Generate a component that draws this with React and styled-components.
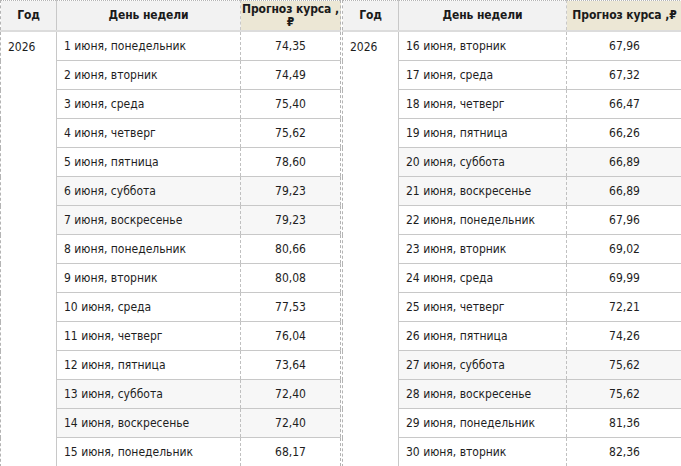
import React from 'react';
import styled, { createGlobalStyle } from 'styled-components';

const GlobalStyle = createGlobalStyle`
  html, body {
    margin: 0;
    padding: 0;
    background: #ffffff;
  }
  body {
    font-family: "DejaVu Sans Condensed", "DejaVu Sans", Tahoma, sans-serif;
    font-size: 12px;
    color: #1e1e1e;
  }
`;

const Page = styled.div`
  display: flex;
  gap: 1px;
  width: 681px;
  height: 466px;
  overflow: hidden;
`;

const Table = styled.table`
  width: ${props => props.width}px;
  table-layout: fixed;
  border-collapse: collapse;
  border: 1px dashed #b4b4b4;
  border-top-style: dotted;
`;

const HeadCell = styled.th`
  height: 29px;
  padding: ${props => (props.accent ? '0' : '0 2px')};
  background: ${props => (props.accent ? '#ece7d5' : '#f2f2f2')};
  border-bottom: 2px solid #dcdcdc;
  border-right: 1px ${props => (props.dashed ? 'dashed' : 'solid')} #c8c8c8;
  font-weight: bold;
  font-size: 12px;
  line-height: 13px;
  letter-spacing: -0.1px;
  text-align: center;
  color: #1a1a1a;
  &:last-child {
    border-right: none;
  }
`;

const YearCell = styled.td`
  vertical-align: top;
  padding: 8px 7px;
  background: #ffffff;
  border-right: 1px solid #c8c8c8;
`;

const DayCell = styled.td`
  height: 28px;
  padding: 0 7px;
  border-bottom: 1px solid #c8c8c8;
  border-right: 1px dashed #c0c0c0;
  background: ${props => (props.weekend ? '#f7f7f7' : '#ffffff')};
  white-space: nowrap;
`;

const ValueCell = styled.td`
  height: 28px;
  padding: 0;
  text-align: center;
  border-bottom: 1px solid #c8c8c8;
  background: ${props => (props.weekend ? '#f7f7f7' : '#ffffff')};
`;

const left = [
  ['1 июня, понедельник', '74,35'],
  ['2 июня, вторник', '74,49'],
  ['3 июня, среда', '75,40'],
  ['4 июня, четверг', '75,62'],
  ['5 июня, пятница', '78,60'],
  ['6 июня, суббота', '79,23', true],
  ['7 июня, воскресенье', '79,23', true],
  ['8 июня, понедельник', '80,66'],
  ['9 июня, вторник', '80,08'],
  ['10 июня, среда', '77,53'],
  ['11 июня, четверг', '76,04'],
  ['12 июня, пятница', '73,64'],
  ['13 июня, суббота', '72,40', true],
  ['14 июня, воскресенье', '72,40', true],
  ['15 июня, понедельник', '68,17'],
];

const right = [
  ['16 июня, вторник', '67,96'],
  ['17 июня, среда', '67,32'],
  ['18 июня, четверг', '66,47'],
  ['19 июня, пятница', '66,26'],
  ['20 июня, суббота', '66,89', true],
  ['21 июня, воскресенье', '66,89', true],
  ['22 июня, понедельник', '67,96'],
  ['23 июня, вторник', '69,02'],
  ['24 июня, среда', '69,99'],
  ['25 июня, четверг', '72,21'],
  ['26 июня, пятница', '74,26'],
  ['27 июня, суббота', '75,62', true],
  ['28 июня, воскресенье', '75,62', true],
  ['29 июня, понедельник', '81,36'],
  ['30 июня, вторник', '82,36'],
];

function ForecastTable({ rows, cols, width }) {
  return (
    <Table width={width}>
      <colgroup>
        {cols.map((w, i) => (
          <col key={i} style={{ width: w }} />
        ))}
      </colgroup>
      <thead>
        <tr>
          <HeadCell>Год</HeadCell>
          <HeadCell dashed>День недели</HeadCell>
          <HeadCell accent>
            Прогноз курса{'\u00A0'},<wbr />₽
          </HeadCell>
        </tr>
      </thead>
      <tbody>
        {rows.map(([day, value, weekend], i) => (
          <tr key={day}>
            {i === 0 && <YearCell rowSpan={rows.length}>2026</YearCell>}
            <DayCell weekend={weekend}>{day}</DayCell>
            <ValueCell weekend={weekend}>{value}</ValueCell>
          </tr>
        ))}
      </tbody>
    </Table>
  );
}

export default function App() {
  return (
    <>
      <GlobalStyle />
      <Page>
        <ForecastTable rows={left} cols={[56, 184, 100]} width={340} />
        <ForecastTable rows={right} cols={[56, 168, 116]} width={340} />
      </Page>
    </>
  );
}
